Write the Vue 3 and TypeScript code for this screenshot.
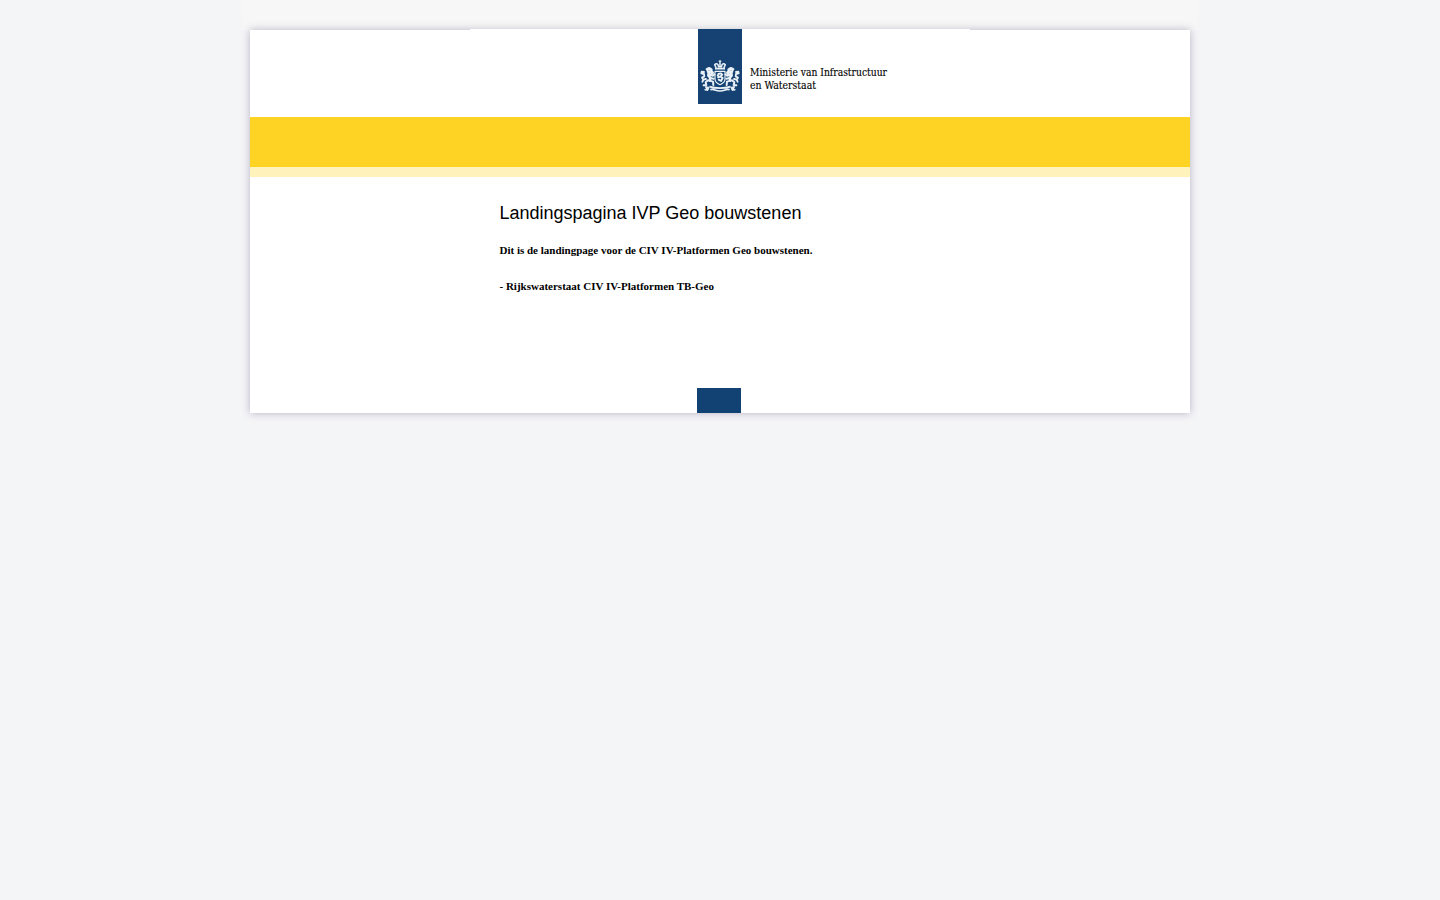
<script setup lang="ts">
const title: string = 'Landingspagina IVP Geo bouwstenen'
const paragraphs: string[] = [
  'Dit is de landingpage voor de CIV IV-Platformen Geo bouwstenen.',
  '- Rijkswaterstaat CIV IV-Platformen TB-Geo',
]
const lionTransforms: string[] = ['matrix(1 0 0 1 0 0)', 'matrix(-1 0 0 1 132 0)']
</script>

<template>
  <div class="page">
    <div class="backdrop">
      <main class="sheet">
        <header class="header">
          <div class="logo">
            <div class="emblem">
              <svg class="crest" viewBox="0 0 132 120" width="44" height="40" aria-hidden="true">
                <g fill="none" stroke="#e9f1f6" stroke-width="4.5" stroke-linecap="round" stroke-linejoin="round">
                  <path d="M66 13v7M63 16h6" stroke-width="3" />
                  <path d="M54 35L50 26q5-6 10 0l2 7M78 35l4-9q-5-6-10 0l-2 7M66 21v12" />
                  <path d="M53 38h26" stroke-width="5" />
                  <path d="M51 46h30v23q0 11-15 17q-15-6-15-17z" stroke-width="3.5" />
                  <path d="M61 54l7-2 5 4-6 5 7 5-5 9-7-4M60 64l7-2M59 58l3 3" stroke-width="5.5" />
                </g>
                <g
                  v-for="transform in lionTransforms"
                  :key="transform"
                  :transform="transform"
                  fill="none"
                  stroke="#e9f1f6"
                  stroke-linecap="round"
                  stroke-linejoin="round"
                >
                  <path d="M27 40l7-3 6 4-2 5-8 1M38 44l6 6-5 6M33 48l-2 10 6 8-2 8" stroke-width="8" />
                  <path d="M36 57l9 2 4-4M36 66l11 2M35 74l10 3 1 10M30 73l-7 6 2 8-8 1" stroke-width="6" />
                  <path d="M24 69l-8 2-4-6 7-4-1-7-8-2 1-5 7 1M16 72l-3 5" stroke-width="5.5" />
                  <path d="M23 92l10 2-3 9-10-1 4-4z" fill="#e9f1f6" stroke-width="3" />
                </g>
                <path d="M34 92q32 9 64 0M37 101q9-2 14 1q15 6 30 0q5-3 14-1" fill="none" stroke="#e9f1f6" stroke-width="5" />
              </svg>
            </div>
            <svg class="wordmark" width="150" height="30" viewBox="0 0 150 30">
              <text x="0" y="12" textLength="137" lengthAdjust="spacingAndGlyphs">Ministerie van Infrastructuur</text>
              <text x="0" y="25" textLength="66" lengthAdjust="spacingAndGlyphs">en Waterstaat</text>
            </svg>
          </div>
        </header>
        <div class="bar"></div>
        <div class="subbar"></div>
        <section class="content">
          <h1>{{ title }}</h1>
          <p v-for="text in paragraphs" :key="text">{{ text }}</p>
        </section>
        <div class="footer-block"></div>
      </main>
    </div>
  </div>
</template>

<style>
html,
body {
  margin: 0;
  background: #f3f5f7;
}
</style>

<style scoped>
.page {
  min-height: 900px;
  background: #f3f5f7;
}
.backdrop {
  box-sizing: border-box;
  width: 956px;
  height: 422px;
  margin: 0 auto;
  padding: 30px 8px 9px;
  background: linear-gradient(#f7f7f7 0 30px, #f5f5f8 30px);
}
.sheet {
  display: flex;
  flex-direction: column;
  height: 383px;
  background: #fff;
  box-shadow: 0 0 8px rgba(70, 65, 100, 0.36);
}
.header {
  width: 500px;
  height: 88px;
  margin: -1px auto 0;
  background: #fff;
}
.logo {
  display: flex;
  padding-left: 228px;
}
.emblem {
  width: 44px;
  height: 75px;
  background: #154273;
}
.crest {
  display: block;
  margin-top: 27px;
}
.wordmark {
  margin: 35px 0 0 8px;
  font-family: "DejaVu Serif Condensed", "DejaVu Serif", serif;
  font-size: 10.5px;
  fill: #000;
  stroke: #000;
  stroke-width: 0.12px;
}
.bar {
  height: 50px;
  background: #ffd323;
}
.subbar {
  height: 10px;
  background: #fff2bb;
}
.content {
  width: 441px;
  margin: 0 auto;
  flex: 1;
}
h1 {
  margin: 25px 0 0;
  font: 400 18px/22px "Liberation Sans", Arial, sans-serif;
  color: #000;
}
p {
  margin: 20px 0 0;
  font: 700 11px/16px "Liberation Serif", "Times New Roman", serif;
  color: #000;
}
h1 + p {
  margin-top: 18px;
}
.footer-block {
  width: 44px;
  height: 25px;
  margin-left: 447px;
  background: #114273;
}
</style>
